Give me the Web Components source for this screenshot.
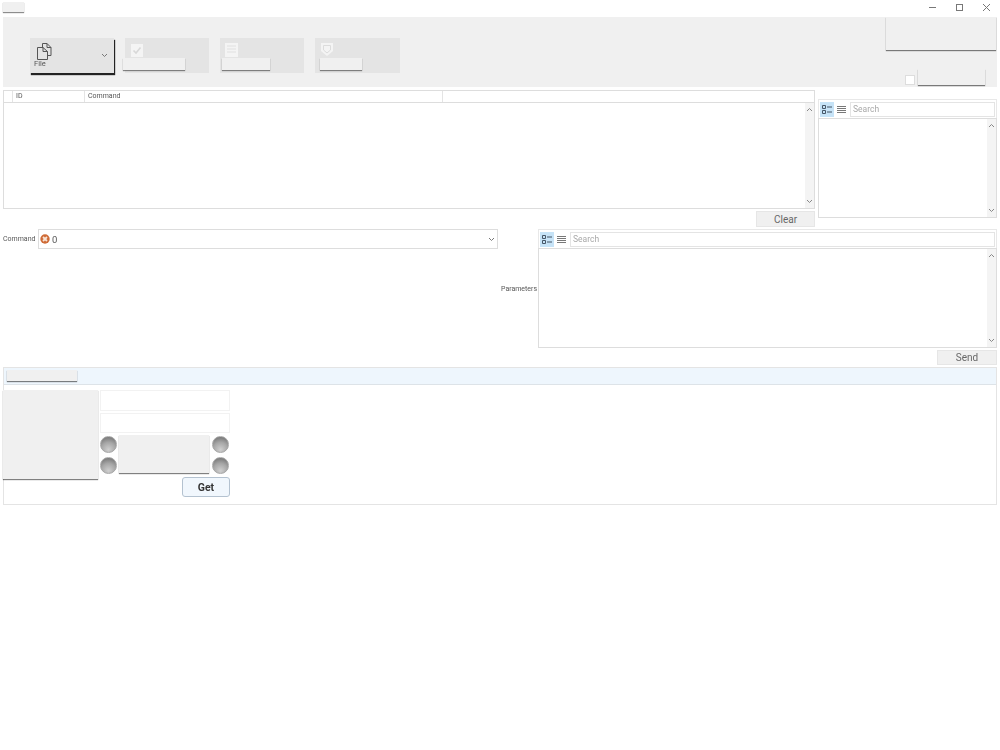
<!DOCTYPE html>
<html>
<head>
<meta charset="utf-8">
<title>Console</title>
<style>
  html, body { margin: 0; background: #fff; }
  body { font-family: Roboto, "Open Sans", sans-serif; color: #555; }
  /* opacity keeps small text in greyscale, the coloured fringes don't belong here */
  #page { display: flex; flex-direction: column; padding: 0 3px; width: 1000px; height: 750px; box-sizing: border-box; opacity: .995; }
</style>
</head>
<body>
<div id="page">
  <title-bar></title-bar>
  <main-ribbon></main-ribbon>
  <history-area></history-area>
  <command-area></command-area>
  <result-section></result-section>
</div>
<script>
const scrollArrow = (dir) => `<svg width="7" height="5" viewBox="0 0 7 5"><path d="${dir === 'up' ? 'M1 4 3.5 1.5 6 4' : 'M1 1 3.5 3.5 6 1'}" fill="none" stroke="#888" stroke-width="1"/></svg>`

customElements.define('title-bar',
  class extends HTMLElement {
    constructor () {
      super()
      this.attachShadow({ mode: 'open' }).innerHTML = `
        <style>
          :host { display: flex; height: 17px; justify-content: space-between; margin-right: -3px; }
          #menu { width: 21px; height: 10px; margin-top: 2px; background: #f0f0f0; box-shadow: 0 1px 1px rgba(0,0,0,.45); }
          #controls { display: flex; }
          #controls div { width: 27px; height: 14px; display: flex; align-items: center; justify-content: center; }
          svg { display: block; }
        </style>
        <div id="menu"></div>
        <div id="controls">
          <div><svg width="9" height="9" viewBox="0 0 9 9"><path d="M1 4.5H8" stroke="#777"/></svg></div>
          <div><svg width="9" height="9" viewBox="0 0 9 9"><rect x="1.5" y="1.5" width="6" height="6" fill="none" stroke="#777"/></svg></div>
          <div><svg width="9" height="9" viewBox="0 0 9 9"><path d="M1 1 8 8M8 1 1 8" stroke="#777"/></svg></div>
        </div>`
    }
  }
)

customElements.define('ribbon-tile',
  class extends HTMLElement {
    constructor () {
      super()
      this.attachShadow({ mode: 'open' }).innerHTML = `
        <style>
          :host { display: block; position: relative; width: 84px; height: 35px; background: #e4e4e4; }
          ::slotted(svg) { position: absolute; left: 5px; top: 4px; }
          #bar { position: absolute; top: 20px; left: var(--bar-left, 0); width: var(--bar-width, 60px); height: 12px; background: #f0f0f0; box-shadow: 0 1px 1px rgba(0,0,0,.45); }
        </style>
        <slot></slot>
        <div id="bar"></div>`
    }
  }
)

customElements.define('file-tile',
  class extends HTMLElement {
    constructor () {
      super()
      this.attachShadow({ mode: 'open' }).innerHTML = `
        <style>
          :host { display: block; position: relative; width: 84px; height: 35px; background: #e4e4e4; box-shadow: 1px 2px 1px #222; }
          svg { position: absolute; }
          #icon { left: 6px; top: 5px; }
          #chev { right: 6px; top: 15px; }
          span { position: absolute; left: 4px; top: 21px; font-size: 7.5px; line-height: 10px; color: #555; }
        </style>
        <svg id="icon" width="16" height="17" viewBox="0 0 16 17">
          <path d="M6.5 .5H11L15 4.5V12.5H12M6.5 .5V4M11 .5V4.5H15" fill="none" stroke="#555"/>
          <path d="M1.5 4.5H7L11.5 8.5V16.5H1.5ZM7 4.5V8.5H11.5" fill="#e4e4e4" stroke="#555"/>
        </svg>
        <svg id="chev" width="7" height="5" viewBox="0 0 7 5"><path d="M1 1 3.5 3.5 6 1" fill="none" stroke="#777"/></svg>
        <span>File</span>`
    }
  }
)

customElements.define('main-ribbon',
  class extends HTMLElement {
    constructor () {
      super()
      this.attachShadow({ mode: 'open' }).innerHTML = `
        <style>
          :host { display: flex; justify-content: space-between; height: 70px; background: #f0f0f0; }
          #tiles { display: flex; padding: 21px 0 0 27px; gap: 11px; align-items: flex-start; }
          #side { display: flex; flex-direction: column; align-items: flex-end; justify-content: space-between; padding-right: 1px; }
          #big { width: 110px; height: 33px; background: #f0f0f0; box-shadow: 0 1px 1px rgba(0,0,0,.5); }
          #row { display: flex; align-items: flex-end; gap: 3px; padding: 0 11px 2px 0; }
          #check { width: 8px; height: 8px; background: #fff; border: 1px solid #ddd; }
          #go { width: 67px; height: 16px; background: #f0f0f0; box-shadow: 0 1px 1px rgba(0,0,0,.5); }
          .bar-a { --bar-left: -2px; --bar-width: 62px; }
          .bar-b { --bar-left: 2px; --bar-width: 48px; }
          .bar-c { --bar-left: 5px; --bar-width: 42px; width: 85px; }
        </style>
        <div id="tiles">
          <file-tile></file-tile>
          <ribbon-tile class="bar-a">
            <svg width="14" height="15" viewBox="0 0 14 15"><path d="M1 2H13V15H1Z" fill="#f4f4f4"/><path d="M3.5 8.5 6 11 10.5 5.5" fill="none" stroke="#d8d8d8" stroke-width="1.6"/></svg>
          </ribbon-tile>
          <ribbon-tile class="bar-b">
            <svg width="13" height="15" viewBox="0 0 13 15"><path d="M0 1H13V15H0Z" fill="#f4f4f4"/><path d="M2 4H11M2 7H11M2 10H11" stroke="#e0e0e0"/></svg>
          </ribbon-tile>
          <ribbon-tile class="bar-c">
            <svg width="14" height="15" viewBox="0 0 14 15"><path d="M1 1H13V9L7 14 1 9Z" fill="#f4f4f4"/><path d="M3.5 3.5H10.5V8L7 11 3.5 8Z" fill="none" stroke="#dcdcdc"/></svg>
          </ribbon-tile>
        </div>
        <div id="side">
          <div id="big"></div>
          <div id="row"><div id="check"></div><div id="go"></div></div>
        </div>`
    }
  }
)

customElements.define('v-scroll',
  class extends HTMLElement {
    constructor () {
      super()
      this.attachShadow({ mode: 'open' }).innerHTML = `
        <style>
          :host { display: flex; flex-direction: column; justify-content: space-between; align-items: center; width: 9px; background: #f4f4f4; padding: 4px 0; box-sizing: border-box; }
          svg { display: block; }
        </style>
        ${scrollArrow('up')}${scrollArrow('down')}`
    }
  }
)

customElements.define('flat-button',
  class extends HTMLElement {
    constructor () {
      super()
      this.attachShadow({ mode: 'open' }).innerHTML = `
        <style>
          :host { display: flex; align-items: center; justify-content: center; width: 60px; height: 16px; background: #f0f0f0; border: 1px solid #e6e6e6; box-sizing: border-box; font-size: 10px; color: #666; }
        </style>
        <slot></slot>`
    }
  }
)

customElements.define('property-panel',
  class extends HTMLElement {
    constructor () {
      super()
      this.attachShadow({ mode: 'open' }).innerHTML = `
        <style>
          :host { display: flex; flex-direction: column; box-sizing: border-box; }
          #tools { display: flex; align-items: center; height: 19px; flex: none; gap: 2px; padding: 0 1px; border: 1px solid #e8e8e8; border-bottom: 0; box-sizing: border-box; }
          .toggle { width: 14px; height: 15px; display: flex; align-items: center; justify-content: center; flex: none; }
          .toggle.on { background: #c6e3f7; }
          .toggle.off { width: 10px; }
          #search { flex: 1; height: 15px; margin-left: 2px; border: 1px solid #e4e4e4; box-sizing: border-box; font-size: 8.5px; line-height: 13px; padding-left: 2px; color: #a8a8a8; }
          #list { flex: 1; display: flex; justify-content: flex-end; border: 1px solid #ddd; min-height: 0; }
          svg { display: block; }
        </style>
        <div id="tools">
          <div class="toggle on"><svg width="10" height="9" viewBox="0 0 10 9"><path d="M.5 .5H3.5V3.5H.5ZM.5 5.5H3.5V8.5H.5Z" fill="none" stroke="#456"/><path d="M5 2H10M5 7H10" stroke="#456"/></svg></div>
          <div class="toggle off"><svg width="9" height="7" viewBox="0 0 9 7"><path d="M0 .5H9M0 2.5H9M0 4.5H9M0 6.5H9" stroke="#777"/></svg></div>
          <div id="search">Search</div>
        </div>
        <div id="list"><v-scroll></v-scroll></div>`
    }
  }
)

customElements.define('history-area',
  class extends HTMLElement {
    constructor () {
      super()
      this.attachShadow({ mode: 'open' }).innerHTML = `
        <style>
          :host { display: grid; grid-template-columns: 812px 179px; column-gap: 3px; height: 137px; margin-top: 3px; }
          #left { display: flex; flex-direction: column; }
          #table { height: 119px; border: 1px solid #ddd; box-sizing: border-box; display: flex; flex-direction: column; }
          #head { display: grid; grid-template-columns: 9px 72px 358px 1fr; height: 12px; flex: none; box-sizing: border-box; border-bottom: 1px solid #ddd; font-size: 7px; line-height: 11px; color: #555; }
          #head div { border-right: 1px solid #e4e4e4; padding-left: 3px; }
          #head div:last-child { border-right: 0; }
          #body { flex: 1; display: flex; justify-content: flex-end; min-height: 0; }
          flat-button { align-self: flex-end; margin-top: 2px; width: 59px; }
          property-panel { height: 119px; margin-top: 9px; }
        </style>
        <div id="left">
          <div id="table">
            <div id="head"><div></div><div>ID</div><div>Command</div><div></div></div>
            <div id="body"><v-scroll></v-scroll></div>
          </div>
          <flat-button>Clear</flat-button>
        </div>
        <property-panel></property-panel>`
    }
  }
)

customElements.define('command-area',
  class extends HTMLElement {
    constructor () {
      super()
      this.attachShadow({ mode: 'open' }).innerHTML = `
        <style>
          :host { display: grid; grid-template-columns: 495px 1fr; column-gap: 3px; margin-top: 2px; font-size: 7px; color: #555; }
          #cmd { display: flex; align-items: flex-start; }
          #cmd > span { width: 35px; flex: none; line-height: 20px; }
          #box { width: 460px; height: 20px; border: 1px solid #ddd; box-sizing: border-box; display: flex; align-items: center; gap: 2px; padding: 0 2px 0 1px; font-size: 9.5px; }
          #box svg:last-child { margin-left: auto; }
          #params { display: grid; grid-template-columns: 35px 1fr; column-gap: 2px; }
          #params > span { align-self: center; text-align: right; line-height: 10px; white-space: nowrap; }
          property-panel { height: 119px; }
          #send { grid-column: 2 / 3; display: flex; justify-content: flex-end; margin-top: 2px; }
          #send flat-button { height: 15px; }
        </style>
        <div id="cmd">
          <span>Command</span>
          <div id="box">
            <svg width="10" height="10" viewBox="0 0 10 10"><circle cx="5" cy="5" r="4.7" fill="#cf6a35"/><path d="M3 3 7 7M7 3 3 7" stroke="#f8e4d6" stroke-width="1.8"/></svg>
            <span>0</span>
            <svg width="7" height="5" viewBox="0 0 7 5"><path d="M1 1 3.5 3.5 6 1" fill="none" stroke="#777"/></svg>
          </div>
        </div>
        <div id="params">
          <span>Parameters</span>
          <property-panel></property-panel>
          <div id="send"><flat-button>Send</flat-button></div>
        </div>`
    }
  }
)

customElements.define('round-led',
  class extends HTMLElement {
    constructor () {
      super()
      this.attachShadow({ mode: 'open' }).innerHTML = `
        <style>
          :host { display: block; width: 17px; height: 17px; box-sizing: border-box; border-radius: 50%; border: 1px solid #a6a6a6; background: radial-gradient(circle at 50% 85%, #cfcfcf 0, #a6a6a6 50%, #7a7a7a 85%); }
        </style>`
    }
  }
)

customElements.define('result-section',
  class extends HTMLElement {
    constructor () {
      super()
      this.attachShadow({ mode: 'open' }).innerHTML = `
        <style>
          :host { display: flex; flex-direction: column; height: 138px; margin-top: 2px; border: 1px solid #e4e4e4; box-sizing: border-box; }
          #head { height: 17px; background: #eef6fd; border-bottom: 1px solid #dde3e8; padding: 2px 0 0 3px; box-sizing: border-box; flex: none; }
          #tab { width: 70px; height: 11px; background: #f0f0f0; box-shadow: 0 1px 1px rgba(0,0,0,.5); }
          #body { display: grid; grid-template-columns: 95px 130px; column-gap: 2px; padding-top: 5px; margin-left: -1px; }
          #preview { width: 95px; height: 89px; background: #f0f0f0; box-shadow: 0 1px 1px rgba(0,0,0,.5); }
          #right { display: flex; flex-direction: column; }
          .field { height: 21px; border: 1px solid #f2f2f2; box-sizing: border-box; margin-bottom: 2px; }
          .field + .field { height: 20px; margin-bottom: 0; }
          #leds { display: grid; grid-template-columns: 19px 93px 17px; grid-template-rows: 17px 17px; row-gap: 4px; margin-top: 3px; }
          #block { grid-column: 2; grid-row: 1 / 3; justify-self: start; width: 90px; height: 38px; margin-top: -1px; background: #f0f0f0; box-shadow: 0 1px 1px rgba(0,0,0,.5); }
          #get { align-self: flex-end; display: flex; align-items: center; justify-content: center; width: 48px; height: 20px; margin-top: 3px; border: 1px solid #b4c2d0; border-radius: 3px; background: #f1f7fd; box-sizing: border-box; font-size: 10.5px; font-weight: 700; color: #333; }
        </style>
        <div id="head"><div id="tab"></div></div>
        <div id="body">
          <div id="preview"></div>
          <div id="right">
            <div class="field"></div>
            <div class="field"></div>
            <div id="leds">
              <round-led></round-led><div id="block"></div><round-led></round-led>
              <round-led style="grid-column:1;grid-row:2"></round-led><round-led style="grid-column:3;grid-row:2"></round-led>
            </div>
            <div id="get">Get</div>
          </div>
        </div>`
    }
  }
)
</script>
</body>
</html>
